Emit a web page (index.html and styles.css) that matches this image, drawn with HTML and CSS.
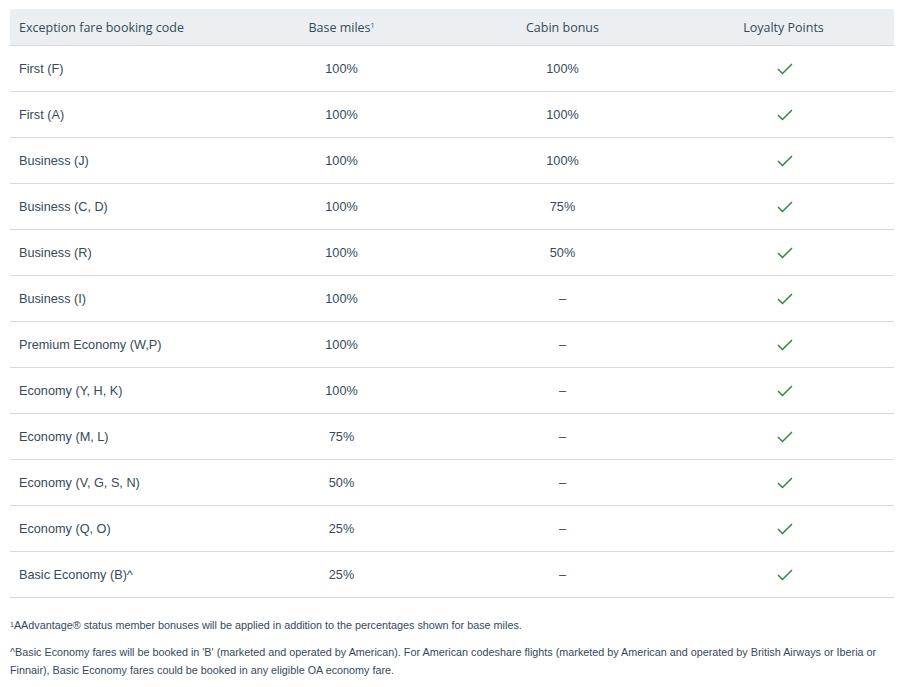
FILE: index.html
```html
<!DOCTYPE html>
<html>
<head>
<meta charset="utf-8">
<link rel="stylesheet" href="styles.css">
</head>
<body>
<div class="wrap">
  <table class="fares">
    <thead>
      <tr><th class="first">Exception fare booking code</th><th>Base miles<sup>1</sup></th><th>Cabin bonus</th><th>Loyalty Points</th></tr>
    </thead>
    <tbody>
      <tr><td class="first">First (F)</td><td>100%</td><td>100%</td><td><svg class="check" viewBox="0 0 16 12"><polyline points="1,6 5.5,10.5 15,1"/></svg></td></tr>
      <tr><td class="first">First (A)</td><td>100%</td><td>100%</td><td><svg class="check" viewBox="0 0 16 12"><polyline points="1,6 5.5,10.5 15,1"/></svg></td></tr>
      <tr><td class="first">Business (J)</td><td>100%</td><td>100%</td><td><svg class="check" viewBox="0 0 16 12"><polyline points="1,6 5.5,10.5 15,1"/></svg></td></tr>
      <tr><td class="first">Business (C, D)</td><td>100%</td><td>75%</td><td><svg class="check" viewBox="0 0 16 12"><polyline points="1,6 5.5,10.5 15,1"/></svg></td></tr>
      <tr><td class="first">Business (R)</td><td>100%</td><td>50%</td><td><svg class="check" viewBox="0 0 16 12"><polyline points="1,6 5.5,10.5 15,1"/></svg></td></tr>
      <tr><td class="first">Business (I)</td><td>100%</td><td>–</td><td><svg class="check" viewBox="0 0 16 12"><polyline points="1,6 5.5,10.5 15,1"/></svg></td></tr>
      <tr><td class="first">Premium Economy (W,P)</td><td>100%</td><td>–</td><td><svg class="check" viewBox="0 0 16 12"><polyline points="1,6 5.5,10.5 15,1"/></svg></td></tr>
      <tr><td class="first">Economy (Y, H, K)</td><td>100%</td><td>–</td><td><svg class="check" viewBox="0 0 16 12"><polyline points="1,6 5.5,10.5 15,1"/></svg></td></tr>
      <tr><td class="first">Economy (M, L)</td><td>75%</td><td>–</td><td><svg class="check" viewBox="0 0 16 12"><polyline points="1,6 5.5,10.5 15,1"/></svg></td></tr>
      <tr><td class="first">Economy (V, G, S, N)</td><td>50%</td><td>–</td><td><svg class="check" viewBox="0 0 16 12"><polyline points="1,6 5.5,10.5 15,1"/></svg></td></tr>
      <tr><td class="first">Economy (Q, O)</td><td>25%</td><td>–</td><td><svg class="check" viewBox="0 0 16 12"><polyline points="1,6 5.5,10.5 15,1"/></svg></td></tr>
      <tr><td class="first">Basic Economy (B)^</td><td>25%</td><td>–</td><td><svg class="check" viewBox="0 0 16 12"><polyline points="1,6 5.5,10.5 15,1"/></svg></td></tr>
    </tbody>
  </table>
  <div class="notes">
    <p><sup>1</sup>AAdvantage® status member bonuses will be applied in addition to the percentages shown for base miles.</p>
    <p>^Basic Economy fares will be booked in 'B' (marketed and operated by American). For American codeshare flights (marketed by American and operated by British Airways or Iberia or Finnair), Basic Economy fares could be booked in any eligible OA economy fare.</p>
  </div>
</div>
</body>
</html>
```

FILE: styles.css
```css
html, body {
  margin: 0;
  padding: 0;
  background: #ffffff;
}
.wrap {
  padding: 9px 7px 0 10px;
  color: #36495a;
  font-family: "Liberation Sans", Arial, sans-serif;
}
.fares {
  width: 884px;
  border-collapse: collapse;
  table-layout: fixed;
}
.fares th {
  background: #eceff1;
  height: 36px;
  padding: 0;
  font-family: "Open Sans", "Liberation Sans", sans-serif;
  font-weight: 400;
  font-size: 12.5px;
  color: #36495a;
  text-align: center;
  border-bottom: 1px solid #d7d9db;
}
.fares th sup {
  font-size: 7px;
  vertical-align: 4px;
}
.fares td {
  height: 45px;
  padding: 0;
  font-size: 12.7px;
  text-align: center;
  border-bottom: 1px solid #d7d9db;
}
.fares .first {
  text-align: left;
  padding-left: 9px;
}
.check {
  width: 16px;
  height: 12px;
  display: inline-block;
  vertical-align: middle;
  margin-left: 2px;
}
.check polyline {
  fill: none;
  stroke: #2c8a3a;
  stroke-width: 1.5;
}
.notes {
  padding-top: 18px;
  font-size: 10.8px;
  line-height: 18px;
  padding-right: 10px;
}
.notes p {
  margin: 0 0 9px 0;
}
.notes sup {
  font-size: 7px;
  vertical-align: 2px;
}
```
